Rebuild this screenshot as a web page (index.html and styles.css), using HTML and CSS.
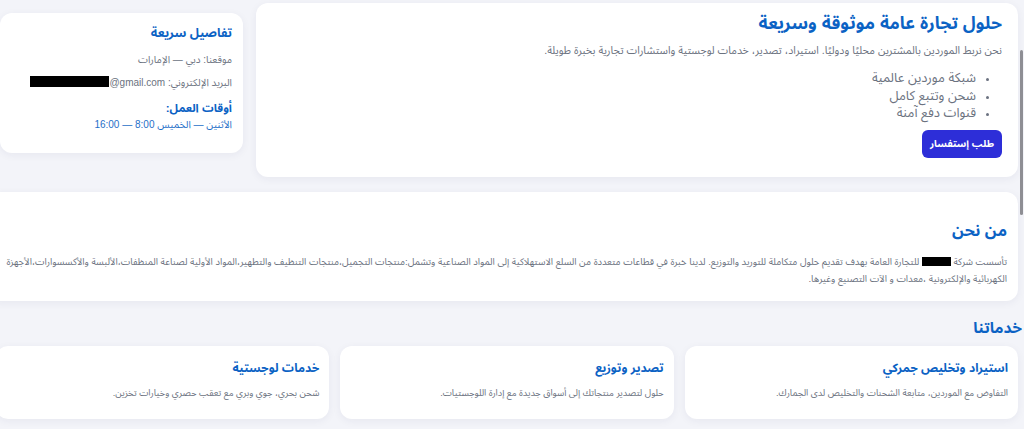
FILE: index.html
```html
<!DOCTYPE html>
<html lang="ar" dir="rtl">
<head>
<meta charset="utf-8">
<title>تجارة عامة</title>
<link rel="stylesheet" href="styles.css">
</head>
<body>
<div class="page">
  <div class="top-row">
    <section class="card hero">
      <h1 class="hero-title">حلول تجارة عامة موثوقة وسريعة</h1>
      <p class="hero-text">نحن نربط الموردين بالمشترين محليًا ودوليًا. استيراد، تصدير، خدمات لوجستية واستشارات تجارية بخبرة طويلة.</p>
      <ul class="hero-list">
        <li>شبكة موردين عالمية</li>
        <li>شحن وتتبع كامل</li>
        <li>قنوات دفع آمنة</li>
      </ul>
      <a class="btn" href="#">طلب إستفسار</a>
    </section>
    <aside class="card side">
      <h3 class="side-title">تفاصيل سريعة</h3>
      <p class="side-line">موقعنا: دبي — الإمارات</p>
      <p class="side-line side-mail">البريد الإلكتروني: <span class="ltr"><span class="redact-mail"></span>@gmail.com</span></p>
      <h4 class="side-sub">أوقات العمل:</h4>
      <p class="side-hours">الأثنين — الخميس 8:00 — 16:00</p>
    </aside>
  </div>

  <section class="card about">
    <h2 class="about-title">من نحن</h2>
    <p class="about-text">تأسست شركة <span class="redact-name"></span> للتجارة العامة بهدف تقديم حلول متكاملة للتوريد والتوزيع. لدينا خبرة في قطاعات متعددة من السلع الاستهلاكية إلى المواد الصناعية وتشمل:منتجات التجميل،منتجات التنظيف والتطهير،المواد الأولية لصناعة المنظفات،الألبسة والأكسسوارات،الأجهزة الكهربائية والإلكترونية ،معدات و الآت التصنيع وغيرها.</p>
  </section>

  <h2 class="services-title">خدماتنا</h2>
  <div class="services">
    <div class="card service">
      <h3 class="service-title">استيراد وتخليص جمركي</h3>
      <p class="service-text">التفاوض مع الموردين، متابعة الشحنات والتخليص لدى الجمارك.</p>
    </div>
    <div class="card service">
      <h3 class="service-title">تصدير وتوزيع</h3>
      <p class="service-text">حلول لتصدير منتجاتك إلى أسواق جديدة مع إدارة اللوجستيات.</p>
    </div>
    <div class="card service">
      <h3 class="service-title">خدمات لوجستية</h3>
      <p class="service-text">شحن بحري، جوي وبري مع تعقب حصري وخيارات تخزين.</p>
    </div>
  </div>
</div>
<div class="scroll-thumb"></div>
</body>
</html>
```

FILE: styles.css
```css
html, body {
  margin: 0;
  padding: 0;
  overflow: hidden;
}
body {
  direction: rtl;
  background: #f3f4f9;
  font-family: "Liberation Sans", "Noto Sans Arabic", sans-serif;
  color: #6b7280;
  width: 1024px;
  height: 429px;
}
.page {
  width: 1030px;
  margin-right: 6px;
  padding-top: 3px;
  box-sizing: border-box;
}
.card {
  background: #ffffff;
  border-radius: 12px;
  box-shadow: 0 2px 8px rgba(30, 40, 80, 0.06);
}
.top-row {
  display: flex;
  align-items: flex-start;
  gap: 13px;
  padding-left: 12px;
}
.hero {
  flex: 1;
  padding: 5px 16px 19px;
}
.hero-title {
  margin: 0;
  font-size: 17.5px;
  line-height: 30px;
  font-weight: 700;
  color: #0b62c4;
}
.hero-text {
  margin: 2px 0 0;
  font-size: 10.7px;
  line-height: 20px;
  color: #6b7280;
}
.hero-list {
  margin: 9px 0 0;
  padding: 0 26px 0 0;
  font-size: 13px;
  line-height: 17.5px;
  color: #6b7280;
}
.hero-list li::marker {
  font-size: 11px;
}
.btn {
  display: inline-flex;
  align-items: center;
  justify-content: center;
  margin-top: 8px;
  width: 80px;
  height: 28px;
  border-radius: 6px;
  background: #2d2ed8;
  color: #ffffff;
  font-size: 10px;
  font-weight: 700;
  text-decoration: none;
}
.side {
  width: 243px;
  box-sizing: border-box;
  margin-top: 10px;
  padding: 11px 11px 20px;
}
.side-title {
  margin: 0;
  font-size: 12.5px;
  line-height: 19px;
  font-weight: 700;
  color: #0b62c4;
}
.side-line {
  margin: 9px 0 0;
  font-size: 10px;
  line-height: 16px;
  color: #6b7280;
}
.side-mail {
  margin-top: 7px;
}
.ltr {
  direction: ltr;
  unicode-bidi: isolate;
  display: inline-block;
}
.redact-mail {
  display: inline-block;
  width: 79px;
  height: 11px;
  background: #000;
  vertical-align: -1px;
}
.side-sub {
  margin: 8px 0 0;
  font-size: 11.5px;
  line-height: 18px;
  font-weight: 700;
  color: #0b62c4;
}
.side-hours {
  margin: 0;
  font-size: 10px;
  line-height: 16px;
  color: #1f6fc8;
}
.about {
  margin-top: 15px;
  padding: 25px 11px 14px;
}
.about-title {
  margin: 0;
  font-size: 16px;
  line-height: 28px;
  font-weight: 700;
  color: #0b62c4;
}
.about-text {
  margin: 8px 0 0;
  font-size: 9.5px;
  line-height: 17px;
  color: #6b7280;
}
.redact-name {
  display: inline-block;
  width: 29px;
  height: 9px;
  background: #000;
  vertical-align: -1px;
}
.services-title {
  margin: 15px -4px 6px 0;
  font-size: 15.4px;
  line-height: 24px;
  font-weight: 700;
  color: #0b62c4;
}
.services {
  display: grid;
  grid-template-columns: 1fr 1fr 1fr;
  gap: 11px;
  margin-left: 8px;
}
.service {
  padding: 12px 10px 18px;
}
.service-title {
  margin: 0;
  font-size: 12px;
  line-height: 20px;
  font-weight: 700;
  color: #0b62c4;
}
.service-text {
  margin: 7px 0 0;
  font-size: 9.2px;
  line-height: 16px;
  color: #6b7280;
}
.scroll-thumb {
  position: fixed;
  right: 1px;
  top: 50px;
  width: 3px;
  height: 165px;
  border-radius: 2px;
  background: #8e8e94;
}
```
